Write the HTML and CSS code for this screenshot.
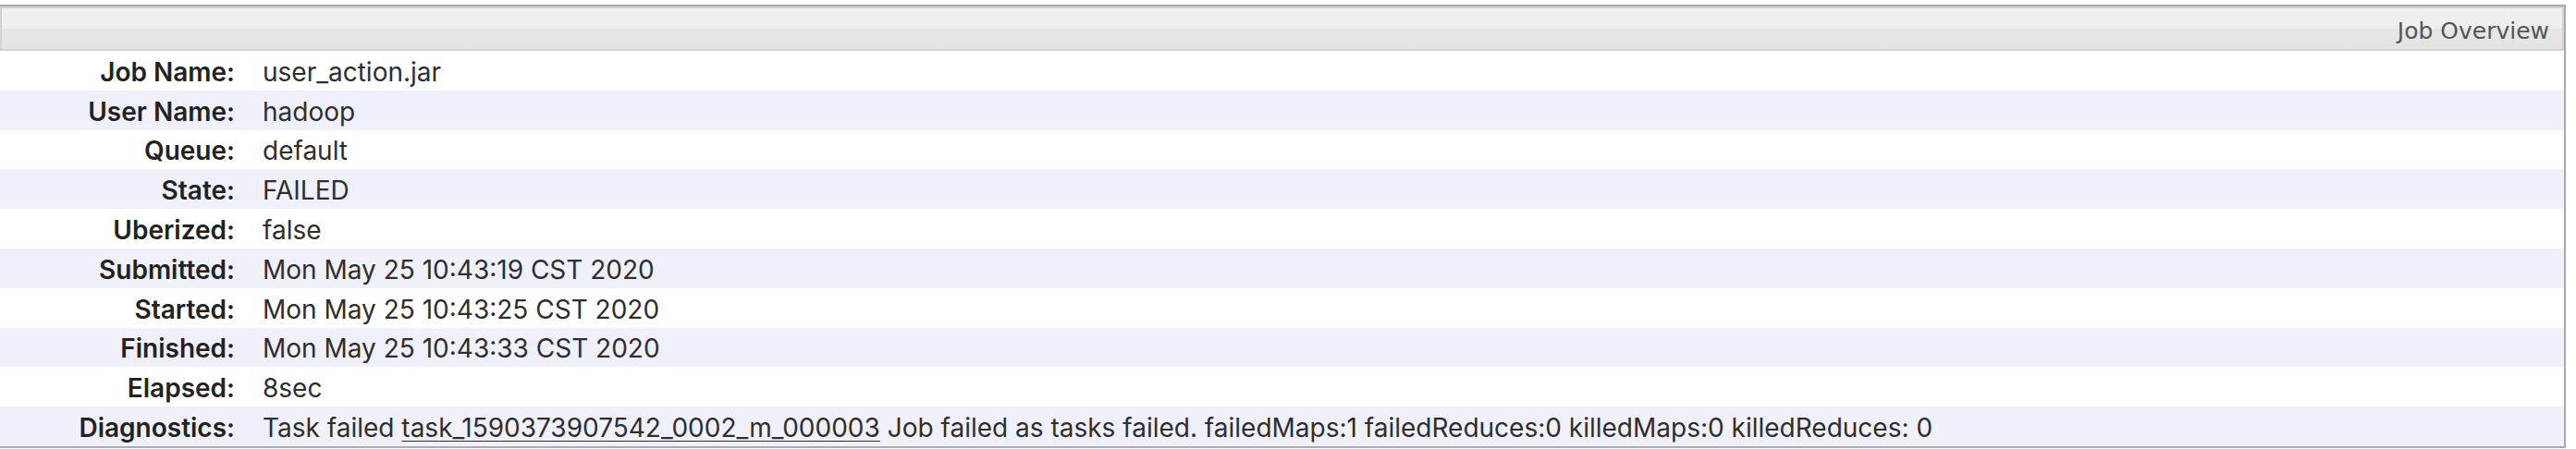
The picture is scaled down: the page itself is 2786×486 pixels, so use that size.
FILE: index.html
```html
<!DOCTYPE html>
<html>
<head>
<meta charset="utf-8">
<title>Job Overview</title>
<link rel="stylesheet" href="styles.css">
</head>
<body>
<div class="info-wrap">
  <div class="info-header">Job Overview</div>
  <div class="info-table">
    <div class="row"><div class="label">Job Name:</div><div class="value">user_action.jar</div></div>
    <div class="row even"><div class="label">User Name:</div><div class="value">hadoop</div></div>
    <div class="row"><div class="label">Queue:</div><div class="value">default</div></div>
    <div class="row even"><div class="label">State:</div><div class="value">FAILED</div></div>
    <div class="row"><div class="label">Uberized:</div><div class="value">false</div></div>
    <div class="row even"><div class="label">Submitted:</div><div class="value">Mon May 25 10:43:19 CST 2020</div></div>
    <div class="row"><div class="label">Started:</div><div class="value">Mon May 25 10:43:25 CST 2020</div></div>
    <div class="row even"><div class="label">Finished:</div><div class="value">Mon May 25 10:43:33 CST 2020</div></div>
    <div class="row"><div class="label">Elapsed:</div><div class="value">8sec</div></div>
    <div class="row even"><div class="label">Diagnostics:</div><div class="value">Task failed <a class="task-link" href="#">task_1590373907542_0002_m_000003</a> Job failed as tasks failed. failedMaps:1 failedReduces:0 killedMaps:0 killedReduces: 0</div></div>
  </div>
</div>
</body>
</html>
```
FILE: styles.css
```css
html, body {
  margin: 0;
  padding: 0;
  background: #ffffff;
}

body {
  font-family: Inter, "Noto Sans", sans-serif;
  font-size: 28px;
  color: #333333;
}

.info-wrap {
  margin: 5px 11px 0 0;
  border: 2px solid #aaaaaa;
  border-left: 0;
}

.info-header {
  height: 44px;
  border: 2px solid #d3d3d3;
  background: linear-gradient(#f0f0f0 0, #eeeeee 50%, #e6e6e6 50%, #e4e4e4 100%);
  font-family: "DejaVu Sans", Verdana, sans-serif;
  font-size: 25px;
  color: #555555;
  text-align: right;
  padding: 2px 14px 0 0;
  box-sizing: content-box;
  height: 42px;
  line-height: 46px;
}

.info-table {
  display: grid;
  grid-auto-rows: 42.8px;
}

.row {
  display: grid;
  grid-template-columns: 254px 1fr;
  column-gap: 30px;
  align-items: center;
  padding-top: 3px;
  white-space: nowrap;
}

.row.even {
  background: #f0f0fb;
}

.label {
  text-align: right;
  font-weight: 600;
  color: #222222;
}

.value {
  color: #2e2e2e;
}

.task-link {
  color: #2e2e2e;
  text-decoration: underline;
  text-underline-offset: 4px;
  text-decoration-thickness: 1px;
}
```
